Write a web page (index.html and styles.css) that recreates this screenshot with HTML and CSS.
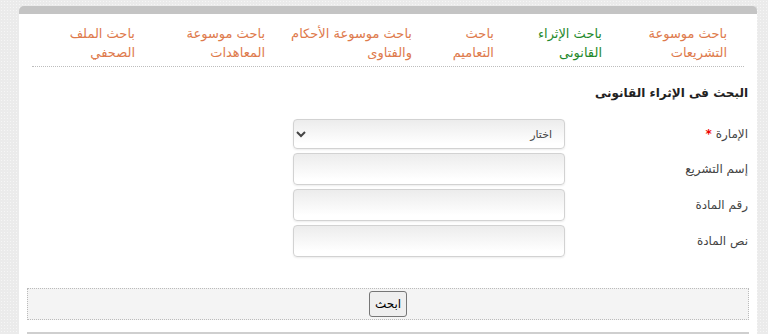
FILE: index.html
```html
<!DOCTYPE html>
<html lang="ar" dir="rtl">

<head>
  <meta charset="UTF-8">
  <title>الإثراء القانونى</title>
  <link rel="stylesheet" href="styles.css">
</head>

<body>
  <div class="panel">
    <ul class="tabs">
      <li><a href="#">باحث موسوعة التشريعات</a></li>
      <li class="active"><a href="#">باحث الإثراء القانونى</a></li>
      <li><a href="#">باحث التعاميم</a></li>
      <li><a href="#">باحث موسوعة الأحكام والفتاوى</a></li>
      <li><a href="#">باحث موسوعة المعاهدات</a></li>
      <li><a href="#">باحث الملف الصحفي</a></li>
    </ul>

    <h3 class="title">البحث فى الإثراء القانونى</h3>

    <div class="form">
      <div class="row">
        <label>الإمارة <span class="req">*</span></label>
        <select class="field">
          <option>اختار</option>
        </select>
      </div>
      <div class="row">
        <label>إسم التشريع</label>
        <input class="field" type="text">
      </div>
      <div class="row">
        <label>رقم المادة</label>
        <input class="field" type="text">
      </div>
      <div class="row">
        <label>نص المادة</label>
        <input class="field" type="text">
      </div>
    </div>

    <div class="actions">
      <button type="button" class="btn">ابحث</button>
    </div>

    <div class="footer-line"></div>
  </div>
</body>

</html>
```

FILE: styles.css
```css
html {
  height: 100%;
  overflow: hidden;
  background-color: #ebebeb;
  background-image: radial-gradient(#f6f6f6 1px, transparent 1px);
  background-size: 3px 3px;
}

body {
  margin: 6px 11px 0 19px;
  font-family: "DejaVu Sans", sans-serif;
}

.panel {
  background: #fff;
  border-top: 8px solid #c4c4c4;
  border-radius: 5px 5px 0 0;
  box-shadow: 2px 0 3px rgba(0, 0, 0, .08);
  height: 320px;
}

/* tabs */
.tabs {
  list-style: none;
  margin: 10px 13px 0 13px;
  padding: 0 0 4px 0;
  display: grid;
  grid-template-columns: 125px 108px 82px 147px 130px 1fr;
  border-bottom: 1px dotted #bdbdbd;
}

.tabs li {
  padding-right: 17px;
  font-size: 13px;
  line-height: 19px;
}

.tabs a {
  color: #de7a4c;
  text-decoration: none;
}

.tabs li.active a {
  color: #1f8a2c;
}

.title {
  margin: 17px 9px 0 0;
  font-family: "DejaVu Sans", sans-serif;
  font-size: 12px;
  line-height: 18px;
  font-weight: bold;
  color: #222;
}

/* form */
.form {
  margin: 17px 9px 0 0;
  display: flex;
  flex-direction: column;
  gap: 4px;
}

.row {
  display: flex;
  align-items: center;
}

.row label {
  width: 183px;
  font-size: 12px;
  color: #444;
}

.req {
  color: #e00;
  font-weight: bold;
}

.field {
  width: 272px;
  height: 32px;
  box-sizing: border-box;
  border: 1px solid #d2d2d2;
  border-radius: 4px;
  background: linear-gradient(#ececec, #fff 85%);
  box-shadow: 0 1px 2px rgba(0, 0, 0, .08);
  font-family: "DejaVu Sans", sans-serif;
  font-size: 11px;
  color: #444;
}

select.field {
  height: 30px;
  padding: 0 8px;
}

/* search bar */
.actions {
  margin: 31px 8px 0 8px;
  height: 32px;
  box-sizing: border-box;
  border: 1px dotted #bbb;
  background: #f4f4f4;
  display: flex;
  align-items: center;
  justify-content: center;
}

.btn {
  width: 38px;
  height: 26px;
  padding: 0;
  border: 1px solid #767676;
  border-radius: 3px;
  background: #efefef;
  font-family: "DejaVu Sans", sans-serif;
  font-size: 12px;
  color: #000;
}

.footer-line {
  margin: 12px 8px 0 8px;
  border-top: 2px solid #cfcfcf;
}
```
